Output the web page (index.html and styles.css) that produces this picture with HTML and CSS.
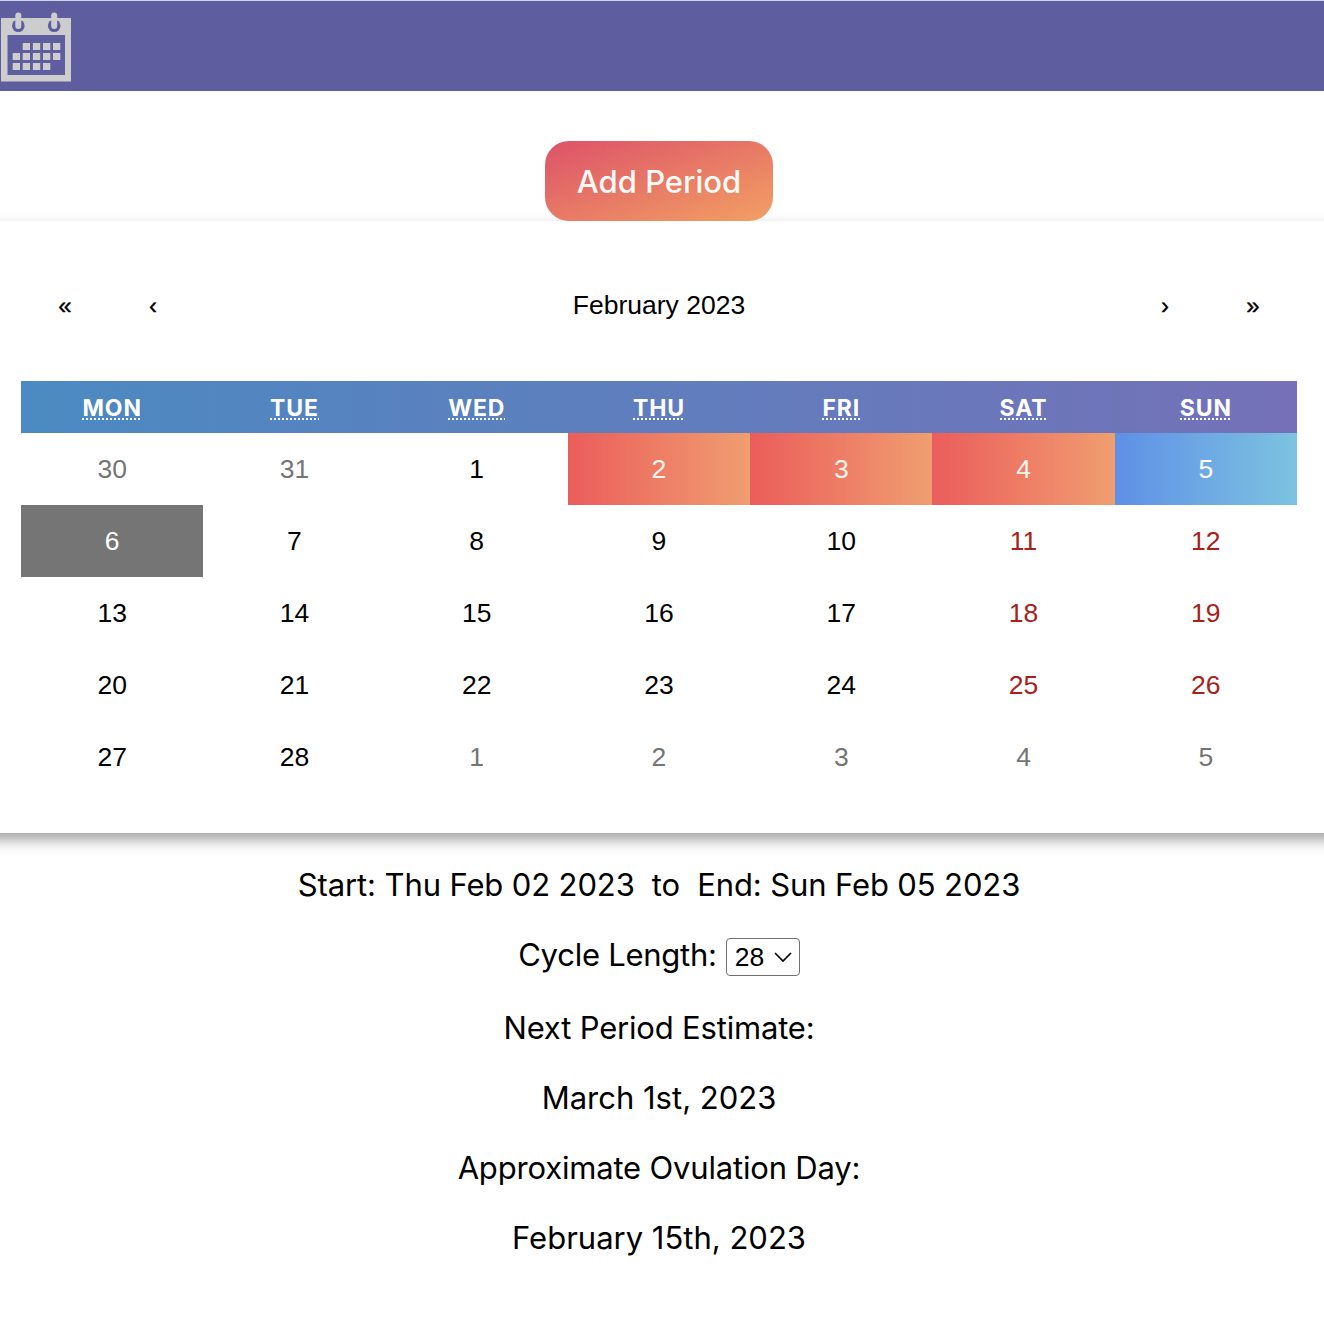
FILE: index.html
```html
<!DOCTYPE html>
<html lang="en">
<head>
<meta charset="utf-8">
<title>Period Calendar</title>
<link rel="stylesheet" href="styles.css">
</head>
<body>
<header class="topbar">
  <svg class="logo" width="74" height="90" viewBox="0 0 74 90" aria-label="Calendar">
    <path fill="#cdcdcd" fill-rule="evenodd" d="M1 18H71V81.500H1ZM7.500 35V75H65V35Z"/>
    <circle cx="18.300" cy="25.800" r="6.300" fill="#5e5d9f"/>
    <circle cx="54.200" cy="25.800" r="6.300" fill="#5e5d9f"/>
    <rect x="15.300" y="12.500" width="6" height="16.500" rx="3" fill="#cdcdcd"/>
    <rect x="51.200" y="12.500" width="6" height="16.500" rx="3" fill="#cdcdcd"/>
    <path fill="#cdcdcd" d="M22.700 43h7.300v7h-7.300zM32.900 43h7.300v7h-7.300zM43 43h7.300v7h-7.300zM53 43h7.300v7h-7.300zM12.700 53h7.300v7h-7.300zM22.700 53h7.300v7h-7.300zM32.900 53h7.300v7h-7.300zM43 53h7.300v7h-7.300zM53 53h7.300v7h-7.300zM12.700 63h7.300v7h-7.300zM22.700 63h7.300v7h-7.300zM32.900 63h7.300v7h-7.300zM43 63h7.300v7h-7.300z"/>
  </svg>
</header>
<main>
  <div class="actions"><button class="add" type="button">Add Period</button></div>
  <section class="calendar">
    <nav class="nav">
      <button type="button">«</button>
      <button type="button">‹</button>
      <span class="month">February 2023</span>
      <button type="button">›</button>
      <button type="button">»</button>
    </nav>
    <div class="weekdays">
      <abbr>MON</abbr><abbr>TUE</abbr><abbr>WED</abbr><abbr>THU</abbr><abbr>FRI</abbr><abbr>SAT</abbr><abbr>SUN</abbr>
    </div>
    <div class="days">
      <span class="out">30</span><span class="out">31</span><span>1</span><span class="period">2</span><span class="period">3</span><span class="period">4</span><span class="last">5</span>
      <span class="today">6</span><span>7</span><span>8</span><span>9</span><span>10</span><span class="weekend">11</span><span class="weekend">12</span>
      <span>13</span><span>14</span><span>15</span><span>16</span><span>17</span><span class="weekend">18</span><span class="weekend">19</span>
      <span>20</span><span>21</span><span>22</span><span>23</span><span>24</span><span class="weekend">25</span><span class="weekend">26</span>
      <span>27</span><span>28</span><span class="out">1</span><span class="out">2</span><span class="out">3</span><span class="out">4</span><span class="out">5</span>
    </div>
  </section>
  <section class="summary">
    <p class="range">Start: Thu Feb 02 2023&nbsp; to&nbsp; End: Sun Feb 05 2023</p>
    <p class="cycle"><label for="cycle">Cycle Length:</label>
      <span class="picker">
        <select id="cycle"><option>28</option></select>
        <svg width="18" height="10" viewBox="0 0 18 10"><path d="M1 1l8 8 8-8" fill="none" stroke="#000" stroke-width="1.700"/></svg>
      </span>
    </p>
    <p class="next">Next Period Estimate:</p>
    <p class="next-date">March 1st, 2023</p>
    <p class="ovulation">Approximate Ovulation Day:</p>
    <p class="ovulation-date">February 15th, 2023</p>
  </section>
</main>
</body>
</html>
```
FILE: styles.css
```css
* { box-sizing: border-box; }

body {
  margin: 0;
  background: #fff;
  color: #000;
  font-family: Inter, "Liberation Sans", sans-serif;
  overflow: hidden;
}

button {
  border: 0;
  padding: 0;
  background: none;
  color: inherit;
}

.topbar {
  height: 91px;
  border-top: 1px solid #cbd3ee;
  background: #5e5d9f;
}

.logo { display: block; margin-top: -1px; }

.actions {
  display: flex;
  justify-content: center;
  padding: 50px 6px 0 0;
}

.add {
  position: relative;
  z-index: 1;
  width: 228px;
  height: 80px;
  border-radius: 24px;
  background: linear-gradient(to bottom right, #dd5269, #f2a063);
  color: #fffaf5;
  font: 450 31px Inter, sans-serif;
}

.calendar {
  height: 612px;
  margin: 0 -20px;
  padding: 40px 47px 0 41px;
  background: #fff;
  box-shadow: 0 7px 13px rgba(0, 0, 0, 0.36);
  font-family: "Liberation Sans", Arial, sans-serif;
  font-size: 26.500px;
}

.nav {
  display: flex;
  height: 88px;
  margin-bottom: 32px;
}

.nav button {
  width: 88px;
  padding-top: 2px;
  font: 24px "Liberation Sans", Arial, sans-serif;
  -webkit-text-stroke: 0.4px #000;
}

.month {
  flex: 1;
  line-height: 88px;
  text-align: center;
}

.weekdays {
  display: grid;
  grid-template-columns: repeat(7, 1fr);
  justify-items: center;
  height: 52px;
  background: linear-gradient(to right, #4b8ac2, #7571b8);
  color: #fff;
  font: 650 23px/30px Inter, sans-serif;
  letter-spacing: 0.900px;
}

.weekdays abbr {
  height: 27px;
  margin-top: 12px;
  background: repeating-linear-gradient(to right, #fff 0 2px, transparent 2px 4px) bottom left / 100% 2px no-repeat;
}

.days {
  display: grid;
  grid-template-columns: repeat(7, 1fr);
  grid-auto-rows: 72px;
  line-height: 72px;
  text-align: center;
}

.out { color: #757575; }
.weekend { color: #a7211b; }
.today { background: #757575; color: #fff; }
.period { background: linear-gradient(to right, #eb5d5b, #f09e70); color: #fff5ed; }
.last { background: linear-gradient(to right, #5e90e6, #7dc3e1); color: #fff; }

.summary {
  display: flex;
  flex-direction: column;
  align-items: center;
  padding: 32px 6px 0 0;
  font-size: 31px;
  line-height: 40px;
}

.summary p { margin: 0 0 30px; white-space: nowrap; }

.summary .range { letter-spacing: -0.120px; }
.summary .next,
.summary .ovulation { letter-spacing: -0.180px; }

.summary .cycle {
  display: flex;
  gap: 9px;
  height: 40px;
  margin-bottom: 33px;
  letter-spacing: -0.250px;
}

.picker {
  display: grid;
  align-items: center;
  width: 74px;
  height: 38px;
  margin-top: 3px;
}

.picker > * { grid-area: 1 / 1; }

.picker select {
  width: 74px;
  height: 38px;
  padding: 0 0 0 8px;
  appearance: none;
  border: 1.500px solid #707070;
  border-radius: 4px;
  background: #fff;
  color: #000;
  font: 26.500px "Liberation Sans", Arial, sans-serif;
}

.picker svg {
  justify-self: end;
  margin-right: 8px;
  pointer-events: none;
}
```
